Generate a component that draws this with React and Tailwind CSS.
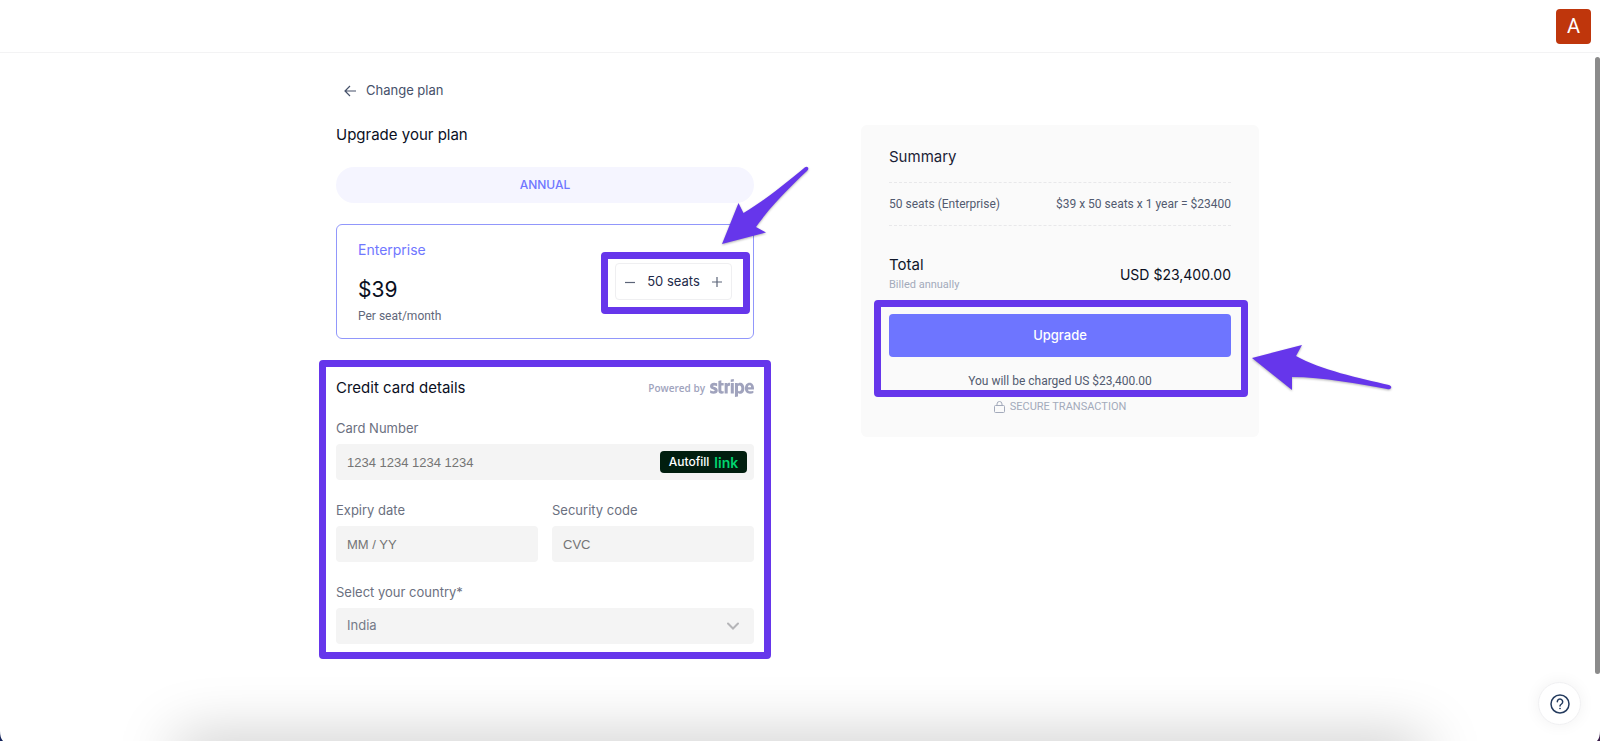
import { useState } from 'react';
import { FaStripe } from 'react-icons/fa';

const PRICE_PER_SEAT = 39;

const Highlight = ({ className }) => (
  <div className={`pointer-events-none absolute rounded border-[7px] border-[#6636EB] ${className}`} />
);

const SeatStepper = ({ seats, setSeats }) => (
  <div className="relative">
    <div className="flex h-[37px] w-[117px] items-center justify-between rounded border border-[#EFEFF1] px-2 text-[#1E2A4A]">
      <button type="button" aria-label="Remove seat" onClick={() => setSeats(Math.max(1, seats - 1))}>
        <svg className="size-3" viewBox="0 0 12 12" stroke="#5B6478" strokeWidth="1.2">
          <path d="M1 6.5h10" />
        </svg>
      </button>
      <span className="text-[13px]">{seats} seats</span>
      <button type="button" aria-label="Add seat" onClick={() => setSeats(seats + 1)}>
        <svg className="size-3" viewBox="0 0 12 12" stroke="#5B6478" strokeWidth="1.2">
          <path d="M1 6h10M6 1v10" />
        </svg>
      </button>
    </div>
    <Highlight className="-top-[11px] -bottom-[14px] -left-[14px] -right-[18px]" />
    <svg
      className="pointer-events-none absolute -top-[99px] left-[106px] h-20 w-[90px] drop-shadow-[0_1px_1px_rgba(0,0,0,0.3)]"
      viewBox="0 0 90 80"
      fill="#6636EB"
    >
      <path d="M1 80 L17.5 39 L22.5 49 C40 39 64 20 84 3.200 Q86 2 87 3.500 Q88 5 86 7 C70 22 48 44 35 63 L45 68.500 Z" />
    </svg>
  </div>
);

const CardForm = () => (
  <section className="relative mt-[37px]">
    <div className="flex h-6 items-center justify-between">
      <h2 className="text-[15px] text-[#0A0F1E]">Credit card details</h2>
      <div className="flex items-center text-[#A0A3BD]">
        <span className="font-['Open_Sans',sans-serif] text-[10px] font-semibold">Powered by</span>
        <FaStripe className="ml-[5px] h-10 w-11" aria-label="stripe" />
      </div>
    </div>

    <div className="mt-[18px]">
      <label htmlFor="card" className="block text-[13px] leading-5 text-[#6B7080]">Card Number</label>
      <div className="relative mt-[6px]">
        <input
          id="card"
          placeholder="1234 1234 1234 1234"
          className="block h-9 w-full rounded bg-[#F4F4F4] px-[11px] font-['Liberation_Sans',Arial,sans-serif] text-[13px] outline-none placeholder:text-[#757575]"
        />
        <button
          type="button"
          className="absolute top-[7px] right-[7px] flex h-[22px] w-[87px] items-center justify-center gap-[5px] rounded bg-[#011E0F] text-[12px] font-medium text-white"
        >
          Autofill <span className="text-[14px] font-semibold text-[#00D66F]">link</span>
        </button>
      </div>
    </div>

    <div className="mt-5 grid grid-cols-2 gap-[14px]">
      <div>
        <label htmlFor="expiry" className="block text-[13px] leading-5 text-[#6B7080]">Expiry date</label>
        <input
          id="expiry"
          placeholder="MM / YY"
          className="mt-[6px] block h-9 w-full rounded bg-[#F4F4F4] px-[11px] font-['Liberation_Sans',Arial,sans-serif] text-[13px] outline-none placeholder:text-[#757575]"
        />
      </div>
      <div>
        <label htmlFor="cvc" className="block text-[13px] leading-5 text-[#6B7080]">Security code</label>
        <input
          id="cvc"
          placeholder="CVC"
          className="mt-[6px] block h-9 w-full rounded bg-[#F4F4F4] px-[11px] font-['Liberation_Sans',Arial,sans-serif] text-[13px] outline-none placeholder:text-[#757575]"
        />
      </div>
    </div>

    <div className="mt-5">
      <label htmlFor="country" className="block text-[13px] leading-5 text-[#6B7080]">Select your country*</label>
      <div className="relative mt-[6px]">
        <select
          id="country"
          className="block h-9 w-full appearance-none rounded bg-[#F4F4F4] px-[11px] text-[13px] text-[#757A88] outline-none"
        >
          <option>India</option>
        </select>
        <svg className="pointer-events-none absolute top-[13px] right-[15px] h-[10px] w-3" viewBox="0 0 12 10" fill="none" stroke="#B5B5B8" strokeWidth="2">
          <path d="M1 2.500 L6 7.500 L11 2.500" strokeLinecap="round" />
        </svg>
      </div>
    </div>
    <Highlight className="-top-4 -bottom-[15px] -left-[17px] -right-[17px]" />
  </section>
);

const Summary = ({ seats }) => {
  const total = seats * PRICE_PER_SEAT * 12;
  const formatted = `${total.toLocaleString('en-US')}.00`;

  return (
    <aside className="mt-[42px] h-fit rounded-md bg-[#FAFAFA] px-7 py-5">
      <h2 className="text-[15px] leading-6 text-[#1B2236]">Summary</h2>
      <div className="mt-[13px] flex h-11 items-center justify-between border-y border-dashed border-[#E8E8EA] font-['Roboto',sans-serif] text-xs text-[#525B70]">
        <span>{seats} seats (Enterprise)</span>
        <span>${PRICE_PER_SEAT} x {seats} seats x 1 year = ${total}</span>
      </div>
      <div className="mt-[27px] flex items-center justify-between">
        <div>
          <p className="text-[15px] leading-6 text-[#0F1729]">Total</p>
          <p className="font-['Roboto',sans-serif] text-[11px] leading-4 text-[#A3AABB]">Billed annually</p>
        </div>
        <p className="pt-1 text-sm text-[#0A0F1E]">USD ${formatted}</p>
      </div>
      <div className="relative mt-[21px]">
        <button type="button" className="block h-[43px] w-full rounded bg-[#6E75FF] text-[13px] font-medium text-white">
          Upgrade
        </button>
        <p className="mt-[14px] text-center font-['Roboto',sans-serif] text-xs leading-5 text-[#525B70]">
          You will be charged US ${formatted}
        </p>
        <Highlight className="-top-[14px] -bottom-[6px] -left-[15px] -right-[17px]" />
        <svg
          className="pointer-events-none absolute top-[30px] left-full ml-5 h-[50px] w-[142px] drop-shadow-[0_1px_1px_rgba(0,0,0,0.3)]"
          viewBox="0 0 142 50"
          fill="#6636EB"
        >
          <path d="M1 14 L51 1 L45 12 C70 26 108 34 138 41 Q141 42 140 44 Q139 46 136 45 C108 40 72 33 41 33 L41 46 Z" />
        </svg>
      </div>
      <p className="mt-[6px] flex items-center justify-center gap-[5px] font-['Roboto',sans-serif] text-[11px] leading-5 text-[#A3AABB]">
        <svg className="h-3 w-[11px]" viewBox="0 0 11 12" fill="none" stroke="currentColor">
          <rect x="0.500" y="4.500" width="10" height="7" rx="1" />
          <path d="M3 4.500V3a2.500 2.500 0 0 1 5 0v1.500" />
        </svg>
        SECURE TRANSACTION
      </p>
    </aside>
  );
};

const App = () => {
  const [seats, setSeats] = useState(50);

  return (
    <div className="relative min-h-screen overflow-hidden bg-white font-['Inter',sans-serif]">
      <header className="flex h-[53px] items-center justify-end border-b border-[#F3F3F4] pr-[9px]">
        <button type="button" className="size-[35px] rounded bg-[#BF360C] font-['Roboto',sans-serif] text-xl text-white">
          A
        </button>
      </header>

      <main className="mr-[5px]">
        <div className="mx-auto grid max-w-[923px] grid-cols-[418fr_398fr] gap-[107px] pt-[30px]">
          <div>
            <a href="#plans" className="ml-2 flex h-4 items-center gap-[10px] text-[13px] text-[#46516A]">
              <svg className="size-3" viewBox="0 0 12 12" fill="none" stroke="currentColor" strokeWidth="1.2">
                <path d="M12 6H1M6 1L1 6l5 5" />
              </svg>
              Change plan
            </a>
            <h1 className="mt-6 text-[15px] leading-6 text-[#0A0F1E]">Upgrade your plan</h1>
            <button type="button" className="mt-5 block h-9 w-full rounded-full bg-[#F5F5FF] text-xs font-medium text-[#7077FF]">
              ANNUAL
            </button>

            <section className="mt-[21px] flex h-[115px] items-center justify-between rounded-md border border-[#9197FB] px-[21px]">
              <div>
                <h2 className="text-sm leading-5 text-[#7077FF]">Enterprise</h2>
                <p className="mt-4 text-[21px] leading-7 text-[#0A0F1E]">${PRICE_PER_SEAT}</p>
                <p className="mt-1 font-['Roboto',sans-serif] text-xs leading-4 text-[#5F677A]">Per seat/month</p>
              </div>
              <SeatStepper seats={seats} setSeats={setSeats} />
            </section>

            <CardForm />
          </div>

          <Summary seats={seats} />
        </div>
      </main>

      <div className="fixed top-[57px] right-0 h-[617px] w-[5px] rounded-full bg-[#8B8B8B]" />
      <button
        type="button"
        aria-label="Help"
        className="fixed right-[19px] bottom-4 flex size-[43px] items-center justify-center rounded-full border border-[#F0F0F2] bg-white shadow-[0_0_16px_rgba(0,0,0,0.06)]"
      >
        <svg className="size-5" viewBox="0 0 20 20" fill="none" stroke="#243B5E" strokeWidth="1.500">
          <circle cx="10" cy="10" r="9" />
          <path d="M7.300 7.800a2.700 2.700 0 1 1 4.200 2.200c-.9.600-1.500 1-1.500 2" strokeLinecap="round" />
          <circle cx="10" cy="14.500" r="0.500" fill="#243B5E" strokeWidth="0.800" />
        </svg>
      </button>
      <div className="pointer-events-none fixed right-[180px] -bottom-10 left-[180px] h-10 shadow-[0_0_60px_4px_rgba(0,0,0,0.22)]" />
      <svg className="fixed bottom-0 left-0 h-[10px] w-[3px]" viewBox="0 0 3 10" fill="#14235A">
        <path d="M0 0Q0 7 3 10H0z" />
      </svg>
      <svg className="fixed right-0 bottom-0 h-[10px] w-[3px]" viewBox="0 0 3 10" fill="#3A1E4A">
        <path d="M3 0Q3 7 0 10H3z" />
      </svg>
    </div>
  );
};

export default App;
